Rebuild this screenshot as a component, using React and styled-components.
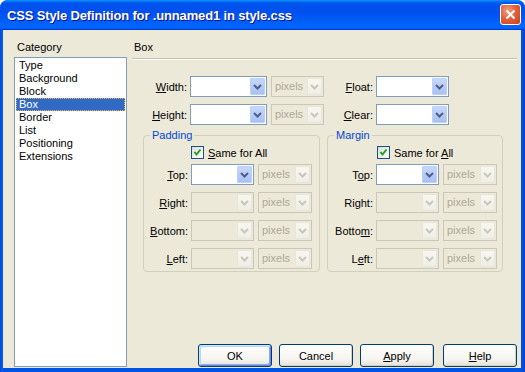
import React from "react"
import styled, { createGlobalStyle } from "styled-components"

const GlobalStyle = createGlobalStyle`
  html, body {
    margin: 0;
    padding: 0;
    background: #fff;
  }
  body {
    font-family: "Liberation Sans", Arial, sans-serif;
    font-size: 11px;
    color: #000;
  }
`

const categories = [
  "Type",
  "Background",
  "Block",
  "Box",
  "Border",
  "List",
  "Positioning",
  "Extensions",
]

const Key = styled.span`
  text-decoration: underline;
`

// draws "Text" with the char at index `k` underlined (mnemonic)
const Mnemonic = ({ text, k }) => {
  if (k == null) return text
  return (
    <>
      {text.slice(0, k)}
      <Key>{text[k]}</Key>
      {text.slice(k + 1)}
    </>
  )
}

const Chevron = ({ color }) => (
  <svg width="9" height="6" viewBox="0 0 9 6">
    <path d="M1 1 L4.5 4.5 L8 1" fill="none" stroke={color} strokeWidth="2" />
  </svg>
)

const Select = ({ width, disabled, value }) => (
  <SelectBox width={width} disabled={disabled}>
    <SelectValue disabled={disabled}>{value}</SelectValue>
    <DropButton disabled={disabled}>
      <Chevron color={disabled ? "#C9C7BA" : "#4D6185"} />
    </DropButton>
  </SelectBox>
)

const Checkbox = () => (
  <CheckBox>
    <svg width="11" height="11" viewBox="0 0 11 11">
      <path
        d="M2.5 5 L4.5 7.5 L8.5 2.5"
        fill="none"
        stroke="#21A121"
        strokeWidth="2"
      />
    </svg>
  </CheckBox>
)

const boxRows = [
  { label: "Top", key: 0, enabled: true },
  { label: "Right", key: 0 },
  { label: "Bottom", key: 0 },
  { label: "Left", key: 0 },
]

const marginRows = [
  { label: "Top", key: 1, enabled: true },
  { label: "Right", key: null },
  { label: "Bottom", key: 5 },
  { label: "Left", key: 1 },
]

const BoxGroup = ({ title, rows, labelWidth, width, checkIndent, checkKey }) => (
  <Group width={width}>
    <Legend>{title}</Legend>
    <CheckRow indent={checkIndent}>
      <Checkbox />
      <span>
        <Mnemonic text="Same for All" k={checkKey} />
      </span>
    </CheckRow>
    <GroupFields>
      {rows.map((row) => (
        <FieldRow key={row.label}>
          <FieldLabel width={labelWidth}>
            <Mnemonic text={row.label} k={row.key} />:
          </FieldLabel>
          <Select width={63} disabled={!row.enabled} />
          <Select width={54} disabled value="pixels" />
        </FieldRow>
      ))}
    </GroupFields>
  </Group>
)

const App = () => {
  return (
    <>
      <GlobalStyle />
      <Window>
        <TitleBar>
          <Title>CSS Style Definition for .unnamed1 in style.css</Title>
          <CloseButton>
            <svg width="11" height="11" viewBox="0 0 11 11">
              <path
                d="M1.5 1.5 L9.5 9.5 M9.5 1.5 L1.5 9.5"
                stroke="#fff"
                strokeWidth="2"
              />
            </svg>
          </CloseButton>
        </TitleBar>
        <Client>
          <LeftColumn>
            <CategoryLabel>Category</CategoryLabel>
            <List>
              {categories.map((c) => (
                <ListItem key={c} selected={c === "Box"}>
                  {c}
                </ListItem>
              ))}
            </List>
          </LeftColumn>
          <RightColumn>
            <Header>Box</Header>
            <TopFields>
              <FieldRow>
                <FieldLabel width={58}>
                  <Mnemonic text="Width" k={0} />:
                </FieldLabel>
                <Select width={77} />
                <Select width={53} disabled value="pixels" />
                <FieldLabel width={52}>
                  <Mnemonic text="Float" k={0} />:
                </FieldLabel>
                <Select width={73} />
              </FieldRow>
              <FieldRow>
                <FieldLabel width={58}>
                  <Mnemonic text="Height" k={0} />:
                </FieldLabel>
                <Select width={77} />
                <Select width={53} disabled value="pixels" />
                <FieldLabel width={52}>
                  <Mnemonic text="Clear" k={0} />:
                </FieldLabel>
                <Select width={73} />
              </FieldRow>
            </TopFields>
            <Groups>
              <BoxGroup
                title="Padding"
                rows={boxRows}
                labelWidth={47}
                checkIndent={47}
                width={177}
                checkKey={0}
              />
              <BoxGroup
                title="Margin"
                rows={marginRows}
                labelWidth={48}
                checkIndent={49}
                width={176}
                checkKey={9}
              />
            </Groups>
            <ButtonRow>
              <Button primary>OK</Button>
              <Button>Cancel</Button>
              <Button>
                <Mnemonic text="Apply" k={0} />
              </Button>
              <Button gapBefore={2}>
                <Mnemonic text="Help" k={0} />
              </Button>
            </ButtonRow>
          </RightColumn>
        </Client>
      </Window>
    </>
  )
}

const Window = styled.div`
  width: 525px;
  height: 372px;
  display: flex;
  flex-direction: column;
  background: linear-gradient(to right, #0046d5 0, #0a5cf0 2px, #0054e3 4px, #0054e3 calc(100% - 4px), #0a3fd0 100%);
  border-radius: 8px 8px 0 0;
  overflow: hidden;
`

const TitleBar = styled.div`
  height: 30px;
  flex-shrink: 0;
  display: flex;
  align-items: center;
  justify-content: space-between;
  padding: 0 4px 0 7px;
  box-sizing: border-box;
  background: linear-gradient(
    to bottom,
    #0997ff 0%,
    #0053ee 10%,
    #0050ee 40%,
    #0066ff 88%,
    #0066ff 93%,
    #005bff 95%,
    #003dd7 97%,
    #003dd7 100%
  );
`

const Title = styled.div`
  color: #fff;
  font-family: "Liberation Sans", Arial, sans-serif;
  font-weight: bold;
  font-size: 13px;
  letter-spacing: -0.15px;
  text-shadow: 1px 1px #0f1089;
  padding-top: 1px;
`

const CloseButton = styled.div`
  width: 21px;
  height: 21px;
  box-sizing: border-box;
  border: 1px solid #fff;
  border-radius: 3px;
  background: radial-gradient(circle at 35% 30%, #f0a080 0%, #e2613c 45%, #c8401a 100%);
  display: flex;
  align-items: center;
  justify-content: center;
  margin-top: -1px;
`

const Client = styled.div`
  flex: 1;
  margin: 0 4px 4px 3px;
  background: #ece9d8;
  display: grid;
  grid-template-columns: 113px 1fr;
  column-gap: 5px;
  padding: 11px 4px 1px 11px;
  min-height: 0;
`

const LeftColumn = styled.div`
  display: flex;
  flex-direction: column;
`

const CategoryLabel = styled.div`
  line-height: 13px;
  padding-left: 3px;
  margin-bottom: 3px;
`

const List = styled.div`
  flex: 1;
  background: #fff;
  border: 1px solid #7f9db9;
  padding: 1px;
`

const ListItem = styled.div`
  height: 13px;
  line-height: 11px;
  box-sizing: border-box;
  padding-left: 2px;
  border: 1px solid transparent;
  ${(p) =>
    p.selected &&
    `
    background: #316ac5;
    color: #fff;
    border: 1px dotted #e8b24a;
  `}
`

const RightColumn = styled.div`
  display: flex;
  flex-direction: column;
`

const Header = styled.div`
  line-height: 13px;
  padding: 0 0 4px 2px;
  border-bottom: 1px solid #c5c2b2;
  box-shadow: 0 1px 0 #fff;
`

const TopFields = styled.div`
  margin-top: 17px;
  display: flex;
  flex-direction: column;
  gap: 7px;
`

const FieldRow = styled.div`
  display: flex;
  align-items: center;
  height: 21px;

  & > div + div {
    margin-left: 4px;
  }
`

const FieldLabel = styled.label`
  width: ${(p) => p.width}px;
  text-align: right;
  padding-right: 3px;
  box-sizing: border-box;
  white-space: nowrap;
  flex-shrink: 0;
`

const SelectBox = styled.div`
  width: ${(p) => p.width}px;
  height: 21px;
  box-sizing: border-box;
  flex-shrink: 0;
  display: flex;
  border: 1px solid ${(p) => (p.disabled ? "#c9c7ba" : "#7f9db9")};
  background: ${(p) => (p.disabled ? "#ece9d8" : "#fff")};
  padding: 1px;
`

const SelectValue = styled.div`
  flex: 1;
  padding-left: 2px;
  line-height: 17px;
  color: ${(p) => (p.disabled ? "#aca899" : "#000")};
`

const DropButton = styled.div`
  width: 15px;
  box-sizing: border-box;
  display: flex;
  align-items: center;
  justify-content: center;
  border-radius: 1px;
  border: 1px solid ${(p) => (p.disabled ? "#e8e6da" : "#bad0f9")};
  background: ${(p) =>
    p.disabled
      ? "linear-gradient(to bottom, #f7f6f0, #efeee6)"
      : "linear-gradient(to bottom, #c8d8fc, #b4c9f7 60%, #a9c0f5)"};
`

const Groups = styled.div`
  margin-top: 4px;
  padding-left: 11px;
  display: flex;
  gap: 7px;
`

const Group = styled.fieldset`
  width: ${(p) => p.width}px;
  box-sizing: border-box;
  margin: 0;
  padding: 0 0 2px 0;
  min-width: 0;
  border: 1px solid #d0d0bf;
  border-radius: 4px;
`

const Legend = styled.legend`
  margin-left: 6px;
  padding: 0 2px;
  line-height: 13px;
  color: #0046d5;
`

const CheckRow = styled.div`
  margin-top: 4px;
  padding-left: ${(p) => p.indent}px;
  display: flex;
  align-items: center;
  gap: 4px;
  height: 13px;
`

const CheckBox = styled.div`
  width: 13px;
  height: 13px;
  box-sizing: border-box;
  border: 1px solid #1c5180;
  background: linear-gradient(135deg, #dcdcd7, #fff);
  display: flex;
  align-items: center;
  justify-content: center;
`

const GroupFields = styled.div`
  margin-top: 5px;
  display: flex;
  flex-direction: column;
  gap: 7px;
`

const ButtonRow = styled.div`
  margin-top: auto;
  display: flex;
  justify-content: flex-end;
  gap: 7px;
`

const Button = styled.div`
  width: 74px;
  height: 23px;
  box-sizing: border-box;
  margin-left: ${(p) => p.gapBefore || 0}px;
  border: 1px solid #003c74;
  border-radius: 3px;
  background: linear-gradient(to bottom, #fff 0%, #f5f4ef 70%, #e3e0d5 100%);
  display: flex;
  align-items: center;
  justify-content: center;
  box-shadow: ${(p) =>
    p.primary
      ? "inset 1px 1px 0 #cee7ff, inset -1px -1px 0 #6982ee, inset 2px 2px 0 #bcd4f6, inset -2px -2px 0 #89ade4"
      : "inset -1px -1px 0 #d6d0c5"};
`

export default App
